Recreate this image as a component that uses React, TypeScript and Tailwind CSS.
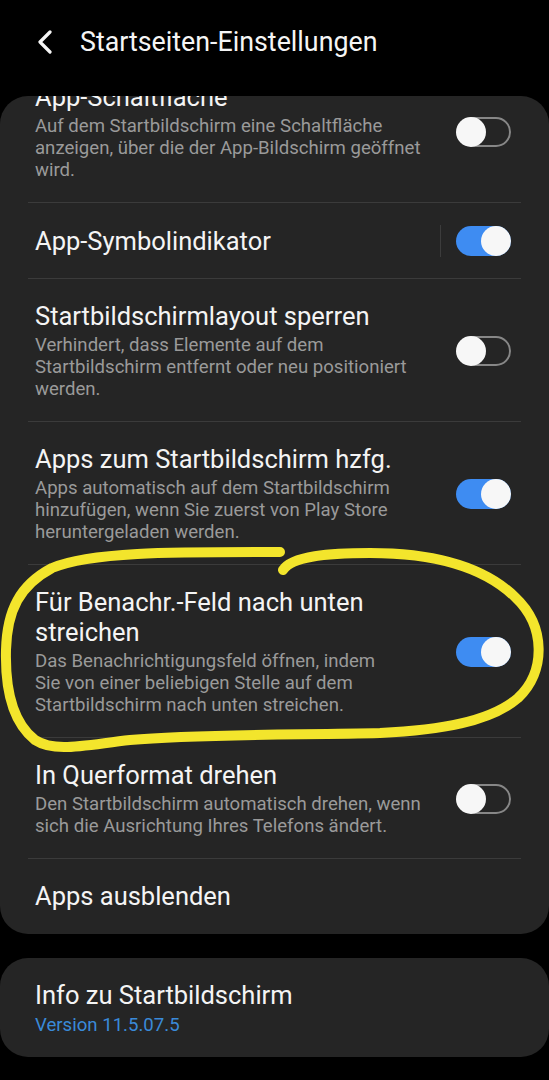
import React from "react"

type Item = {
  title: string[]
  desc?: string[]
  toggle?: "on" | "off"
  split?: boolean
  clipTop?: boolean
}

const items: Item[] = [
  {
    title: ["App-Schaltfläche"],
    desc: [
      "Auf dem Startbildschirm eine Schaltfläche",
      "anzeigen, über die der App-Bildschirm geöffnet",
      "wird.",
    ],
    toggle: "off",
    clipTop: true,
  },
  { title: ["App-Symbolindikator"], toggle: "on", split: true },
  {
    title: ["Startbildschirmlayout sperren"],
    desc: [
      "Verhindert, dass Elemente auf dem",
      "Startbildschirm entfernt oder neu positioniert",
      "werden.",
    ],
    toggle: "off",
  },
  {
    title: ["Apps zum Startbildschirm hzfg."],
    desc: [
      "Apps automatisch auf dem Startbildschirm",
      "hinzufügen, wenn Sie zuerst von Play Store",
      "heruntergeladen werden.",
    ],
    toggle: "on",
  },
  {
    title: ["Für Benachr.-Feld nach unten", "streichen"],
    desc: [
      "Das Benachrichtigungsfeld öffnen, indem",
      "Sie von einer beliebigen Stelle auf dem",
      "Startbildschirm nach unten streichen.",
    ],
    toggle: "on",
  },
  {
    title: ["In Querformat drehen"],
    desc: [
      "Den Startbildschirm automatisch drehen, wenn",
      "sich die Ausrichtung Ihres Telefons ändert.",
    ],
    toggle: "off",
  },
  { title: ["Apps ausblenden"] },
]

function Toggle({ on }: { on: boolean }) {
  if (on) {
    return (
      <div className="relative w-[55px] h-[30px] rounded-full bg-[#3e8cf2]">
        <div className="absolute right-0 top-0 w-[30px] h-[30px] rounded-full bg-[#f7f7f7]" />
      </div>
    )
  }
  return (
    <div className="relative w-[55px] h-[30px]">
      <div className="absolute left-[3px] right-0 top-0 h-[30px] rounded-full border-2 border-[#878787]" />
      <div className="absolute left-0 top-0 w-[30px] h-[30px] rounded-full bg-[#f7f7f7]" />
    </div>
  )
}

function Row({ item, last }: { item: Item; last?: boolean }) {
  return (
    <div
      className={`flex items-center pl-[35px] pr-[38px] ${last ? "pb-[23px]" : "pb-[21px]"} ${
        item.clipTop ? "-mt-[14px]" : "pt-[22px]"
      }`}
    >
      <div className="flex-1 whitespace-nowrap">
        {item.title.map((t) => (
          <div key={t} className="text-[25.5px] leading-[30px] text-[#f4f4f4]">
            {t}
          </div>
        ))}
        {item.desc && (
          <div className="mt-[3px]">
            {item.desc.map((d) => (
              <div key={d} className="text-[18.6px] leading-[22px] text-[#9a9a9a]">
                {d}
              </div>
            ))}
          </div>
        )}
      </div>
      {item.split && <div className="w-px h-[32px] bg-[#3c3c3c] mr-[15px]" />}
      {item.toggle && <Toggle on={item.toggle === "on"} />}
    </div>
  )
}

export default function App() {
  return (
    <div className="w-[549px] h-[1080px] bg-black overflow-hidden" style={{ fontFamily: "Roboto, 'Noto Sans', sans-serif" }}>
      <header className="h-[96px] flex items-center pl-[37px] pb-[12px] relative z-10 bg-black">
        <svg width="16" height="24" viewBox="0 0 16 24" className="mr-[27px]">
          <path d="M13 2 L3 12 L13 22" fill="none" stroke="#f5f5f5" strokeWidth="3.2" strokeLinecap="round" strokeLinejoin="round" />
        </svg>
        <h1 className="text-[26.8px] text-[#f5f5f5]">Startseiten-Einstellungen</h1>
      </header>

      <div className="relative">
        <div className="bg-[#252525] rounded-[28px] overflow-hidden">
          {items.map((item, i) => (
            <div key={i}>
              {i > 0 && <div className="mx-[28px] h-px bg-[#3b3b3b]" />}
              <Row item={item} last={i === items.length - 1} />
            </div>
          ))}
        </div>

        <div className="mt-[24px] bg-[#252525] rounded-[28px] pl-[35px] pt-[22px] pb-[21px]">
          <div className="text-[25.5px] leading-[30px] text-[#f4f4f4]">Info zu Startbildschirm</div>
          <div className="mt-[4px] text-[18.6px] leading-[22px] text-[#3a8ad8]">Version 11.5.07.5</div>
        </div>

        <svg className="absolute left-0 top-[-96px] pointer-events-none" width="549" height="1080" viewBox="0 0 549 1080">
          <path
            d="M283 570 C 292 556, 330 553, 370 553 C 430 553, 482 565, 515 597 C 546 626, 546 672, 518 698 C 490 722, 440 730, 380 733 C 300 735, 200 734, 130 740 C 85 745, 55 753, 35 740 C 12 722, 5 690, 6 650 C 7 610, 20 585, 52 568 C 92 551, 180 552, 280 552"
            fill="none"
            stroke="#f3e52c"
            strokeWidth="10"
            strokeLinecap="round"
            strokeLinejoin="round"
          />
        </svg>
      </div>
    </div>
  )
}
